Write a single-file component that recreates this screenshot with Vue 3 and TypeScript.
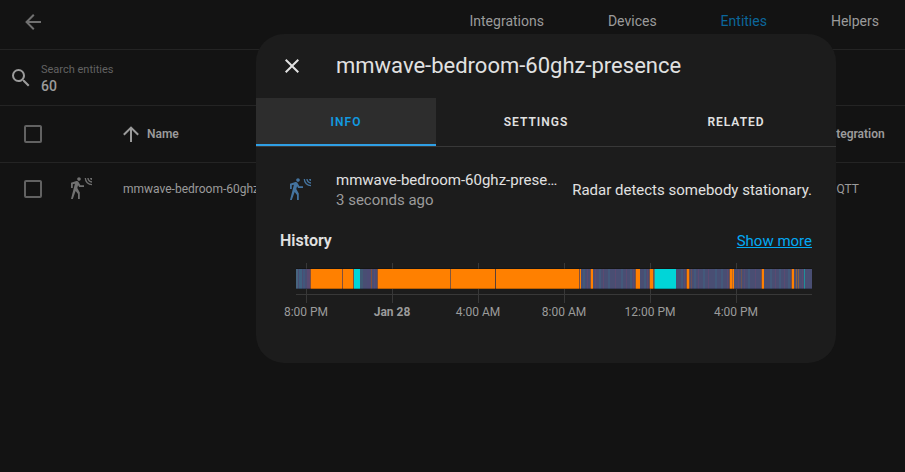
<script setup lang="ts">
import { ref } from 'vue'

interface Segment {
  start: number
  end: number
  color: string
}

const walkPath =
  'M10,0.2C9,0.2 8.2,1 8.2,2C8.2,3 9,3.8 10,3.8C11,3.8 11.8,3 11.8,2C11.8,1 11,0.2 10,0.2M15.67,1A7.33,7.33 0 0,0 23,8.33V7A6,6 0 0,1 17,1H15.67M18.33,1C18.33,3.58 20.42,5.67 23,5.67V4.33C21.16,4.33 19.67,2.84 19.67,1H18.33M21,1A2,2 0 0,0 23,3V1H21M7.92,4.03C7.75,4.03 7.58,4.06 7.42,4.11L2,5.8V11H3.8V7.33L5.91,6.67L2,22H3.8L6.67,13.89L9,17V22H10.8V15.59L8.31,11.05L9.04,8.18L10.12,10H15V8.2H11.38L9.38,4.87C9.08,4.37 8.54,4.03 7.92,4.03Z'

const search = ref('60')
const navItems = ['Integrations', 'Devices', 'Entities', 'Helpers']
const tabs = ['Info', 'Settings', 'Related']
const activeTab = ref('Info')

const orange = '#ff8000'
const teal = '#00d5d8'
const slate = '#494e73'
const plum = '#5a4a72'
const steel = '#3f6180'
const rust = '#80503f'

// Long states first, then the short flickers drawn over them.
const segments: Segment[] = [
  { start: 0, end: 516, color: slate },
  { start: 0, end: 2, color: '#47647f' },
  { start: 3, end: 6, color: steel },
  { start: 7, end: 9, color: '#41577c' },
  { start: 11, end: 14, color: plum },
  { start: 14, end: 15, color: rust },
  { start: 15, end: 57, color: orange },
  { start: 46, end: 47, color: rust },
  { start: 57, end: 58, color: rust },
  { start: 58, end: 64, color: teal },
  { start: 64, end: 67, color: '#405a75' },
  { start: 71, end: 74, color: '#4c4b75' },
  { start: 75, end: 76, color: rust },
  { start: 78, end: 79, color: plum },
  { start: 81, end: 82, color: rust },
  { start: 82, end: 285, color: orange },
  { start: 154, end: 155, color: '#80573f' },
  { start: 199, end: 200, color: '#5a4038' },
  { start: 283, end: 284, color: rust },
  { start: 294, end: 295, color: rust },
  { start: 295, end: 297, color: orange },
  { start: 339, end: 340, color: rust },
  { start: 340, end: 344, color: orange },
  { start: 353, end: 354, color: rust },
  { start: 354, end: 357, color: orange },
  { start: 357, end: 358, color: rust },
  { start: 358, end: 359, color: '#4a7f80' },
  { start: 359, end: 380, color: teal },
  { start: 390, end: 391, color: rust },
  { start: 391, end: 393, color: orange },
  { start: 393, end: 394, color: rust },
  { start: 395, end: 396, color: '#6b5058' },
  { start: 433, end: 434, color: rust },
  { start: 434, end: 436, color: orange },
  { start: 436, end: 437, color: '#c06a20' },
  { start: 437, end: 438, color: orange },
  { start: 445, end: 446, color: '#70554f' },
  { start: 465, end: 466, color: rust },
  { start: 466, end: 468, color: orange },
  { start: 495, end: 496, color: rust },
  { start: 496, end: 498, color: orange },
  { start: 500, end: 501, color: '#856044' },
  { start: 502, end: 503, color: '#856044' },
  { start: 508, end: 509, color: '#20909a' },
]

const flickers: Segment[] = [
  ...[287, 303, 312, 325, 334, 348, 385, 398, 407, 419, 425, 452, 474, 483, 492].map((x) => ({
    start: x,
    end: x + 2,
    color: steel,
  })),
  ...[291, 299, 307, 319, 330, 337, 351, 388, 402, 412, 431, 442, 448, 459, 479, 488, 506].map((x) => ({
    start: x,
    end: x + 1,
    color: '#67476f',
  })),
]

const ticks = [
  { x: 10, label: '8:00 PM', bold: false },
  { x: 96, label: 'Jan 28', bold: true },
  { x: 182, label: '4:00 AM', bold: false },
  { x: 268, label: '8:00 AM', bold: false },
  { x: 354, label: '12:00 PM', bold: false },
  { x: 440, label: '4:00 PM', bold: false },
]
</script>

<template>
  <div class="page">
    <header class="toolbar">
      <button class="icon-button back" aria-label="Back">
        <svg viewBox="0 0 24 24"><path d="M20,11V13H8L13.5,18.5L12.08,19.92L4.16,12L12.08,4.08L13.5,5.5L8,11H20Z" /></svg>
      </button>
      <nav class="nav">
        <a v-for="item in navItems" :key="item" href="#" :class="{ active: item === 'Entities' }">{{ item }}</a>
      </nav>
    </header>

    <div class="search">
      <svg viewBox="0 0 24 24"><path d="M9.5,3A6.5,6.5 0 0,1 16,9.5C16,11.11 15.41,12.59 14.44,13.73L14.71,14H15.5L20.5,19L19,20.5L14,15.5V14.71L13.73,14.44C12.59,15.41 11.11,16 9.5,16A6.5,6.5 0 0,1 3,9.5A6.5,6.5 0 0,1 9.5,3M9.5,5C7,5 5,7 5,9.5C5,12 7,14 9.5,14C12,14 14,12 14,9.5C14,7 12,5 9.5,5Z" /></svg>
      <div class="field">
        <label for="search">Search entities</label>
        <input id="search" v-model="search" type="text" />
      </div>
    </div>

    <table class="entities">
      <thead>
        <tr>
          <th class="check"><input type="checkbox" aria-label="Select all" /></th>
          <th class="glyph"></th>
          <th>
            <span class="sort">
              <svg viewBox="0 0 24 24"><path d="M13,20H11V8L5.5,13.5L4.08,12.08L12,4.16L19.92,12.08L18.5,13.5L13,8V20Z" /></svg>
              Name
            </span>
          </th>
          <th class="integration">Integration</th>
        </tr>
      </thead>
      <tbody>
        <tr>
          <td class="check"><input type="checkbox" aria-label="Select entity" /></td>
          <td class="glyph"><svg viewBox="0 0 24 24"><path :d="walkPath" /></svg></td>
          <td>mmwave-bedroom-60ghz-presence</td>
          <td class="integration">MQTT</td>
        </tr>
      </tbody>
    </table>

    <section class="dialog" role="dialog" aria-labelledby="dialog-title">
      <header class="dialog-header">
        <button class="icon-button" aria-label="Close">
          <svg viewBox="0 0 24 24"><path d="M19,6.41L17.59,5L12,10.59L6.41,5L5,6.41L10.59,12L5,17.59L6.41,19L12,13.41L17.59,19L19,17.59L13.41,12L19,6.41Z" /></svg>
        </button>
        <h1 id="dialog-title">mmwave-bedroom-60ghz-presence</h1>
      </header>

      <div class="tabs" role="tablist">
        <button
          v-for="tab in tabs"
          :key="tab"
          role="tab"
          :aria-selected="tab === activeTab"
          :class="{ selected: tab === activeTab }"
          @click="activeTab = tab"
        >
          {{ tab }}
        </button>
      </div>

      <div class="content">
        <div class="state">
          <svg viewBox="0 0 24 24"><path :d="walkPath" /></svg>
          <div class="info">
            <div class="name">mmwave-bedroom-60ghz-presence</div>
            <div class="time">3 seconds ago</div>
          </div>
          <div class="value">Radar detects somebody stationary.</div>
        </div>

        <div class="history-header">
          <h2>History</h2>
          <a href="#">Show more</a>
        </div>

        <svg class="chart" viewBox="0 0 516 60">
          <g class="grid">
            <rect v-for="tick in ticks" :key="tick.x" :x="tick.x" y="0" width="1" height="40" />
            <rect x="0" y="31" width="516" height="1" />
          </g>
          <g shape-rendering="crispEdges">
            <rect
              v-for="(s, i) in segments"
              :key="i"
              :x="s.start"
              y="6"
              :width="s.end - s.start"
              height="20"
              :fill="s.color"
            />
            <rect
              v-for="(s, i) in flickers"
              :key="'f' + i"
              :x="s.start"
              y="6"
              :width="s.end - s.start"
              height="20"
              :fill="s.color"
              opacity="0.6"
            />
            <rect class="edge" x="0" y="5" width="516" height="1" />
            <rect class="edge" x="0" y="25" width="516" height="1" />
          </g>
          <text v-for="tick in ticks" :key="tick.label" :x="tick.x" y="53" :class="{ bold: tick.bold }">
            {{ tick.label }}
          </text>
        </svg>
      </div>
    </section>
  </div>
</template>

<style>
body {
  margin: 0;
  background: #131313;
}
</style>

<style scoped>
.page {
  position: relative;
  min-height: 100vh;
  overflow: hidden;
  background: #131313;
  color: #9b9b9b;
  font-family: Roboto, 'Liberation Sans', sans-serif;
  font-size: 14px;
}

svg {
  display: block;
  flex: none;
  width: 24px;
  height: 24px;
  fill: currentColor;
}

button,
input {
  margin: 0;
  padding: 0;
  border: 0;
  background: none;
  color: inherit;
  font: inherit;
}

.icon-button {
  display: flex;
}

.toolbar {
  display: flex;
  align-items: center;
  justify-content: space-between;
  height: 49px;
  padding: 0 26px 0 21px;
  border-bottom: 1px solid #242424;
}

.back {
  margin-bottom: 5px;
  color: #707070;
}

.nav {
  display: flex;
  gap: 64px;
  padding-bottom: 7px;
}

.nav a {
  color: inherit;
  text-decoration: none;
}

.nav .active {
  color: #0b679b;
}

.search {
  display: flex;
  align-items: center;
  gap: 8px;
  height: 55px;
  padding: 0 9px;
  border-bottom: 1px solid #242424;
}

.field {
  display: flex;
  flex: 1;
  flex-direction: column;
}

.field label {
  color: #626262;
  font-size: 11px;
  line-height: 16px;
}

.field input {
  height: 16px;
  font-weight: 500;
  outline: none;
}

.entities {
  width: 100%;
  border-collapse: collapse;
  table-layout: fixed;
  font-size: 12px;
}

.entities th,
.entities td {
  padding: 0;
  text-align: left;
  white-space: nowrap;
}

.entities th {
  height: 56px;
  border-bottom: 1px solid #242424;
  font-weight: 600;
}

.entities td {
  height: 52px;
}

.entities .check {
  width: 45px;
  padding-left: 24px;
}

.entities .glyph {
  width: 54px;
  color: #707070;
}

.entities .integration {
  width: 79px;
}

.entities input {
  display: block;
  box-sizing: border-box;
  width: 18px;
  height: 18px;
  appearance: none;
  border: 2px solid #626262;
  border-radius: 2px;
}

.sort {
  display: flex;
  align-items: center;
  gap: 4px;
  margin-left: -4px;
}

.dialog {
  position: absolute;
  top: 34px;
  left: 256px;
  box-sizing: border-box;
  width: 580px;
  max-width: 100%;
  padding-bottom: 40px;
  border-radius: 28px;
  background: #1c1c1c;
  color: #e1e1e1;
  overflow: hidden;
}

.dialog-header {
  display: flex;
  align-items: center;
  gap: 32px;
  height: 64px;
  padding: 0 24px;
}

h1,
h2 {
  margin: 0;
}

h1 {
  padding-bottom: 2px;
  font-size: 22px;
  font-weight: 400;
}

.tabs {
  display: flex;
  border-bottom: 1px solid #383838;
}

.tabs button {
  flex: 1 1 200px;
  height: 48px;
  padding-top: 2px;
  border-bottom: 2px solid transparent;
  font-size: 12px;
  font-weight: 600;
  letter-spacing: 1px;
  text-transform: uppercase;
}

.tabs .selected {
  flex-basis: 180px;
  border-bottom-color: #2f9fe5;
  background: #2d2d2d;
  color: #129ae0;
}

.content {
  padding: 23px 24px 0;
}

.state {
  display: flex;
  align-items: center;
  height: 40px;
  font-size: 15px;
}

.state svg {
  margin: 0 16px 0 8px;
  color: #44739e;
}

.info {
  flex: 1;
  min-width: 0;
  padding-left: 8px;
  line-height: 20px;
}

.name {
  overflow: hidden;
  text-overflow: ellipsis;
  white-space: nowrap;
}

.time {
  color: #9b9b9b;
}

.value {
  margin-left: 12px;
}

.history-header {
  display: flex;
  align-items: baseline;
  justify-content: space-between;
  height: 20px;
  margin-top: 21px;
}

h2 {
  font-size: 16px;
  font-weight: 600;
}

.history-header a {
  color: #03a9f4;
  font-size: 15px;
}

.chart {
  box-sizing: border-box;
  width: 100%;
  height: auto;
  margin-top: 12px;
  padding-left: 16px;
  overflow: visible;
}

.grid {
  fill: #383838;
}

.edge {
  fill: #000;
  opacity: 0.25;
}

.chart text {
  fill: #9b9b9b;
  font-size: 12px;
  text-anchor: middle;
}

.chart .bold {
  font-weight: 700;
}
</style>
